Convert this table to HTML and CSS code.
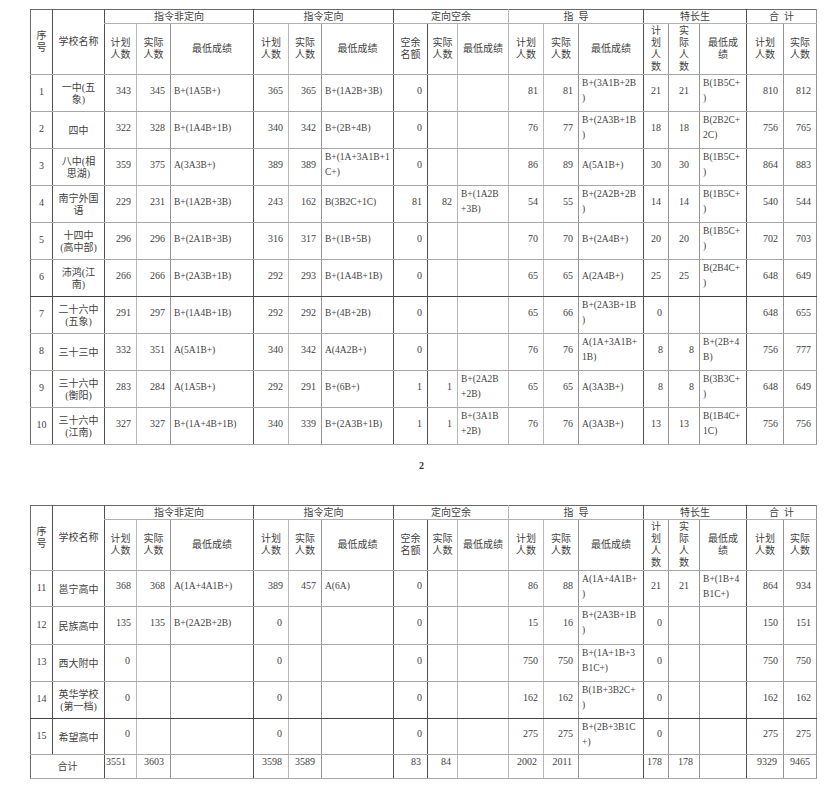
FILE: index.html
```html
<!DOCTYPE html>
<html lang="zh">
<head>
<meta charset="utf-8">
<title>录取情况</title>
<link rel="stylesheet" href="styles.css">
</head>
<body>
<div class="page">
<table class="t">
<colgroup>
<col class="c-no dk"><col class="c-name dk"><col class="c-a lt"><col class="c-b"><col class="c-s1 dk">
<col class="c-a2 lt"><col class="c-b2"><col class="c-s2 dk">
<col class="c-k dk"><col class="c-b3 lt"><col class="c-s3 lt">
<col class="c-a4 lt"><col class="c-b4"><col class="c-s4 dk">
<col class="c-a5"><col class="c-b5"><col class="c-s5 dk">
<col class="c-a6"><col class="c-b6">
</colgroup>
<tbody>
<tr class="g">
<td rowspan="2" class="h">序<br>号</td><td rowspan="2" class="h">学校名称</td>
<td colspan="3" class="gh">指令非定向</td><td colspan="3" class="gh">指令定向</td><td colspan="3" class="gh">定向空余</td>
<td colspan="3" class="gh">指&nbsp;&nbsp;导</td><td colspan="3" class="gh">特长生</td><td colspan="2" class="gh">合&nbsp;&nbsp;计</td>
</tr>
<tr class="hr">
<td class="h">计划<br>人数</td><td class="h">实际<br>人数</td><td class="h">最低成绩</td>
<td class="h">计划<br>人数</td><td class="h">实际<br>人数</td><td class="h">最低成绩</td>
<td class="h">空余<br>名额</td><td class="h">实际<br>人数</td><td class="h">最低成绩</td>
<td class="h">计划<br>人数</td><td class="h">实际<br>人数</td><td class="h">最低成绩</td>
<td class="h">计<br>划<br>人<br>数</td><td class="h">实<br>际<br>人<br>数</td><td class="h">最低成<br>绩</td>
<td class="h">计划<br>人数</td><td class="h">实际<br>人数</td>
</tr>
<tr class="r">
<td class="no">1</td><td class="nm">一中(五<br>象)</td><td class="n">343</td><td class="n">345</td><td class="s">B+(1A5B+)</td>
<td class="n">365</td><td class="n">365</td><td class="s">B+(1A2B+3B)</td><td class="n">0</td><td></td><td></td>
<td class="n">81</td><td class="n">81</td><td class="s w">B+(3A1B+2B<br>)</td><td class="n c">21</td><td class="n c">21</td><td class="s w">B(1B5C+<br>)</td>
<td class="n">810</td><td class="n">812</td>
</tr>
<tr class="r">
<td class="no">2</td><td class="nm">四中</td><td class="n">322</td><td class="n">328</td><td class="s">B+(1A4B+1B)</td>
<td class="n">340</td><td class="n">342</td><td class="s">B+(2B+4B)</td><td class="n">0</td><td></td><td></td>
<td class="n">76</td><td class="n">77</td><td class="s w">B+(2A3B+1B<br>)</td><td class="n c">18</td><td class="n c">18</td><td class="s w">B(2B2C+<br>2C)</td>
<td class="n">756</td><td class="n">765</td>
</tr>
<tr class="r">
<td class="no">3</td><td class="nm">八中(相<br>思湖)</td><td class="n">359</td><td class="n">375</td><td class="s">A(3A3B+)</td>
<td class="n">389</td><td class="n">389</td><td class="s w">B+(1A+3A1B+1<br>C+)</td><td class="n">0</td><td></td><td></td>
<td class="n">86</td><td class="n">89</td><td class="s">A(5A1B+)</td><td class="n c">30</td><td class="n c">30</td><td class="s w">B(1B5C+<br>)</td>
<td class="n">864</td><td class="n">883</td>
</tr>
<tr class="r">
<td class="no">4</td><td class="nm">南宁外国<br>语</td><td class="n">229</td><td class="n">231</td><td class="s">B+(1A2B+3B)</td>
<td class="n">243</td><td class="n">162</td><td class="s">B(3B2C+1C)</td><td class="n">81</td><td class="n">82</td><td class="s w">B+(1A2B<br>+3B)</td>
<td class="n">54</td><td class="n">55</td><td class="s w">B+(2A2B+2B<br>)</td><td class="n c">14</td><td class="n c">14</td><td class="s w">B(1B5C+<br>)</td>
<td class="n">540</td><td class="n">544</td>
</tr>
<tr class="r">
<td class="no">5</td><td class="nm">十四中<br>(高中部)</td><td class="n">296</td><td class="n">296</td><td class="s">B+(2A1B+3B)</td>
<td class="n">316</td><td class="n">317</td><td class="s">B+(1B+5B)</td><td class="n">0</td><td></td><td></td>
<td class="n">70</td><td class="n">70</td><td class="s">B+(2A4B+)</td><td class="n c">20</td><td class="n c">20</td><td class="s w">B(1B5C+<br>)</td>
<td class="n">702</td><td class="n">703</td>
</tr>
<tr class="r dkb">
<td class="no">6</td><td class="nm">沛鸿(江<br>南)</td><td class="n">266</td><td class="n">266</td><td class="s">B+(2A3B+1B)</td>
<td class="n">292</td><td class="n">293</td><td class="s">B+(1A4B+1B)</td><td class="n">0</td><td></td><td></td>
<td class="n">65</td><td class="n">65</td><td class="s">A(2A4B+)</td><td class="n c">25</td><td class="n c">25</td><td class="s w">B(2B4C+<br>)</td>
<td class="n">648</td><td class="n">649</td>
</tr>
<tr class="r">
<td class="no">7</td><td class="nm">二十六中<br>(五象)</td><td class="n">291</td><td class="n">297</td><td class="s">B+(1A4B+1B)</td>
<td class="n">292</td><td class="n">292</td><td class="s">B+(4B+2B)</td><td class="n">0</td><td></td><td></td>
<td class="n">65</td><td class="n">66</td><td class="s w">B+(2A3B+1B<br>)</td><td class="n z">0</td><td></td><td></td>
<td class="n">648</td><td class="n">655</td>
</tr>
<tr class="r">
<td class="no">8</td><td class="nm">三十三中</td><td class="n">332</td><td class="n">351</td><td class="s">A(5A1B+)</td>
<td class="n">340</td><td class="n">342</td><td class="s">A(4A2B+)</td><td class="n">0</td><td></td><td></td>
<td class="n">76</td><td class="n">76</td><td class="s w">A(1A+3A1B+<br>1B)</td><td class="n">8</td><td class="n">8</td><td class="s w">B+(2B+4<br>B)</td>
<td class="n">756</td><td class="n">777</td>
</tr>
<tr class="r">
<td class="no">9</td><td class="nm">三十六中<br>(衡阳)</td><td class="n">283</td><td class="n">284</td><td class="s">A(1A5B+)</td>
<td class="n">292</td><td class="n">291</td><td class="s">B+(6B+)</td><td class="n">1</td><td class="n">1</td><td class="s w">B+(2A2B<br>+2B)</td>
<td class="n">65</td><td class="n">65</td><td class="s">A(3A3B+)</td><td class="n">8</td><td class="n">8</td><td class="s w">B(3B3C+<br>)</td>
<td class="n">648</td><td class="n">649</td>
</tr>
<tr class="r">
<td class="no">10</td><td class="nm">三十六中<br>(江南)</td><td class="n">327</td><td class="n">327</td><td class="s">B+(1A+4B+1B)</td>
<td class="n">340</td><td class="n">339</td><td class="s">B+(2A3B+1B)</td><td class="n">1</td><td class="n">1</td><td class="s w">B+(3A1B<br>+2B)</td>
<td class="n">76</td><td class="n">76</td><td class="s">A(3A3B+)</td><td class="n c">13</td><td class="n c">13</td><td class="s w">B(1B4C+<br>1C)</td>
<td class="n">756</td><td class="n">756</td>
</tr>
</tbody>
</table>

<div class="pnum">2</div>

<table class="t">
<colgroup>
<col class="c-no dk"><col class="c-name dk"><col class="c-a lt"><col class="c-b"><col class="c-s1 dk">
<col class="c-a2 lt"><col class="c-b2"><col class="c-s2 dk">
<col class="c-k dk"><col class="c-b3 lt"><col class="c-s3 lt">
<col class="c-a4 lt"><col class="c-b4"><col class="c-s4 dk">
<col class="c-a5"><col class="c-b5"><col class="c-s5 dk">
<col class="c-a6"><col class="c-b6">
</colgroup>
<tbody>
<tr class="g">
<td rowspan="2" class="h">序<br>号</td><td rowspan="2" class="h">学校名称</td>
<td colspan="3" class="gh">指令非定向</td><td colspan="3" class="gh">指令定向</td><td colspan="3" class="gh">定向空余</td>
<td colspan="3" class="gh">指&nbsp;&nbsp;导</td><td colspan="3" class="gh">特长生</td><td colspan="2" class="gh">合&nbsp;&nbsp;计</td>
</tr>
<tr class="hr">
<td class="h">计划<br>人数</td><td class="h">实际<br>人数</td><td class="h">最低成绩</td>
<td class="h">计划<br>人数</td><td class="h">实际<br>人数</td><td class="h">最低成绩</td>
<td class="h">空余<br>名额</td><td class="h">实际<br>人数</td><td class="h">最低成绩</td>
<td class="h">计划<br>人数</td><td class="h">实际<br>人数</td><td class="h">最低成绩</td>
<td class="h">计<br>划<br>人<br>数</td><td class="h">实<br>际<br>人<br>数</td><td class="h">最低成<br>绩</td>
<td class="h">计划<br>人数</td><td class="h">实际<br>人数</td>
</tr>
<tr class="r r36">
<td class="no">11</td><td class="nm">邕宁高中</td><td class="n">368</td><td class="n">368</td><td class="s">A(1A+4A1B+)</td>
<td class="n">389</td><td class="n">457</td><td class="s">A(6A)</td><td class="n">0</td><td></td><td></td>
<td class="n">86</td><td class="n">88</td><td class="s w">A(1A+4A1B+<br>)</td><td class="n c">21</td><td class="n c">21</td><td class="s w">B+(1B+4<br>B1C+)</td>
<td class="n">864</td><td class="n">934</td>
</tr>
<tr class="r r38">
<td class="no">12</td><td class="nm">民族高中</td><td class="n">135</td><td class="n">135</td><td class="s">B+(2A2B+2B)</td>
<td class="n z">0</td><td></td><td></td><td class="n">0</td><td></td><td></td>
<td class="n">15</td><td class="n">16</td><td class="s w">B+(2A3B+1B<br>)</td><td class="n z">0</td><td></td><td></td>
<td class="n">150</td><td class="n">151</td>
</tr>
<tr class="r">
<td class="no">13</td><td class="nm">西大附中</td><td class="n z">0</td><td></td><td></td>
<td class="n z">0</td><td></td><td></td><td class="n">0</td><td></td><td></td>
<td class="n">750</td><td class="n">750</td><td class="s w">B+(1A+1B+3<br>B1C+)</td><td class="n z">0</td><td></td><td></td>
<td class="n">750</td><td class="n">750</td>
</tr>
<tr class="r dkb">
<td class="no">14</td><td class="nm">英华学校<br>(第一档)</td><td class="n z">0</td><td></td><td></td>
<td class="n z">0</td><td></td><td></td><td class="n">0</td><td></td><td></td>
<td class="n">162</td><td class="n">162</td><td class="s w">B(1B+3B2C+<br>)</td><td class="n z">0</td><td></td><td></td>
<td class="n">162</td><td class="n">162</td>
</tr>
<tr class="r r36">
<td class="no">15</td><td class="nm">希望高中</td><td class="n z">0</td><td></td><td></td>
<td class="n z">0</td><td></td><td></td><td class="n">0</td><td></td><td></td>
<td class="n">275</td><td class="n">275</td><td class="s w">B+(2B+3B1C<br>+)</td><td class="n z">0</td><td></td><td></td>
<td class="n">275</td><td class="n">275</td>
</tr>
<tr class="tot">
<td colspan="2" class="tl">合计</td><td class="tn first">3551</td><td class="tn">3603</td><td></td>
<td class="tn">3598</td><td class="tn">3589</td><td></td><td class="tn">83</td><td class="tn">84</td><td></td>
<td class="tn">2002</td><td class="tn">2011</td><td></td><td class="tn">178</td><td class="tn">178</td><td></td>
<td class="tn">9329</td><td class="tn">9465</td>
</tr>
</tbody>
</table>
</div>
</body>
</html>
```

FILE: styles.css
```css
html, body {
  margin: 0;
  padding: 0;
  background: #ffffff;
}
body {
  font-family: "Liberation Serif", "Noto Sans CJK SC", serif;
  font-size: 10px;
  color: #3f3f3f;
}
.page {
  padding: 9px 0 0 30px;
}
.t {
  border-collapse: collapse;
  table-layout: fixed;
  width: 787px;
  border: 1px solid #6a6a6a;
}
.t col { border-right: 1px solid #949494; }
.t col.dk { border-right-color: #505050; }
.t col.lt { border-right-color: #b8b8b8; }

.c-no { width: 22px; }
.c-name { width: 52px; }
.c-a { width: 32px; }
.c-b { width: 34px; }
.c-s1 { width: 83px; }
.c-a2 { width: 35px; }
.c-b2 { width: 33px; }
.c-s2 { width: 72px; }
.c-k { width: 34px; }
.c-b3 { width: 30px; }
.c-s3 { width: 51px; }
.c-a4 { width: 35px; }
.c-b4 { width: 35px; }
.c-s4 { width: 65px; }
.c-a5 { width: 25px; }
.c-b5 { width: 31px; }
.c-s5 { width: 47px; }
.c-a6 { width: 37px; }
.c-b6 { width: 33px; }

.t tr { border-bottom: 1px solid #a8a8a8; }
.t tr.dkb { border-bottom-color: #444; }
.t tr.g { border-bottom-color: #b0b0b0; }

.t td {
  padding: 0;
  white-space: nowrap;
  overflow: hidden;
  vertical-align: middle;
  line-height: 12px;
}

.t tr.g { height: 14px; }
.t tr.hr { height: 51px; }
.t tr.r { height: 37px; }
.t tr.r36 { height: 36px; }
.t tr.r38 { height: 38px; }
.t tr.tot { height: 24px; }

.h, .gh {
  text-align: center;
  line-height: 11.5px;
  font-size: 10px;
}
.no {
  text-align: center;
  padding-bottom: 2px !important;
}
.nm {
  text-align: center;
  font-size: 10px;
  line-height: 12px;
  padding-top: 2px !important;
}
.n {
  text-align: right;
  padding: 0 5px 5px 0 !important;
}
.n.c {
  text-align: center;
  padding-right: 0 !important;
}
.n.z {
  padding-right: 6px !important;
}
.s {
  text-align: left;
  padding: 0 0 5px 3px !important;
  font-size: 9.5px;
}
.s.w {
  vertical-align: top;
  line-height: 15px;
  padding: 1px 0 0 3px !important;
}
.tl {
  text-align: center;
  font-size: 10px;
}
.tn {
  text-align: right;
  vertical-align: top !important;
  padding: 1px 6px 0 0 !important;
}
.tn.first {
  text-align: left;
  padding: 1px 0 0 1px !important;
}

.pnum {
  padding-left: 389px;
  font-weight: bold;
  font-size: 10px;
  line-height: 14px;
  margin: 14px 0 32px;
  color: #333;
}
```
